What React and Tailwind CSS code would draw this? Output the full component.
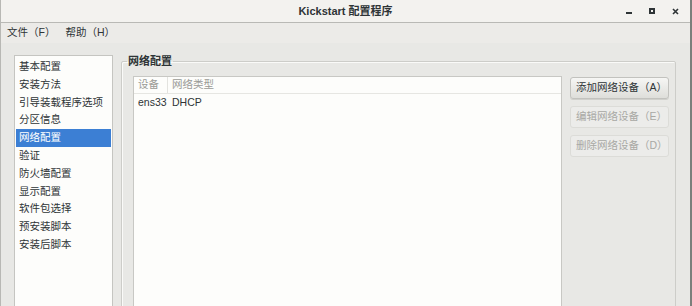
import React from 'react';

const items = ['基本配置', '安装方法', '引导装载程序选项', '分区信息', '网络配置', '验证', '防火墙配置', '显示配置', '软件包选择', '预安装脚本', '安装后脚本'];

const font = { fontFamily: '"Liberation Sans", "Noto Sans CJK SC", sans-serif' };

const Button = ({ label, disabled }) => (
  <div
    className={
      'h-[22px] flex items-center pl-[5px] rounded-[3px] border text-[10.5px] whitespace-nowrap ' +
      (disabled
        ? 'border-[#dcdcd8] bg-[#ececea] text-[#a8a8a4]'
        : 'border-[#c2c2be] bg-gradient-to-b from-[#f6f6f4] to-[#dededa] text-[#2e3436] shadow-[0_1px_0_#d0d0cc]')
    }
  >
    {label}
  </div>
);

export default function App() {
  return (
    <div style={font} className="w-[692px] h-[306px] overflow-hidden bg-[#e8e8e5] flex flex-col border-l border-[#b8b8b4] border-r-2 border-r-[#7c7f7b] text-[#2e3436] whitespace-nowrap">
      <div className="h-[23px] shrink-0 bg-[#f3f2ef] border-b border-[#b9b9b5] flex items-center relative">
        <div className="flex-1 text-center text-[11px] font-bold">Kickstart 配置程序</div>
        <div className="absolute right-[11px] top-0 h-full flex items-center gap-[17px] text-[#2e3436]">
          <div className="w-[6px] h-[2px] bg-[#2e3436] mt-[4px]" />
          <div className="w-[6px] h-[6px] border-2 border-[#2e3436]" />
          <svg width="7" height="7" viewBox="0 0 7 7"><path d="M1 1L6 6M6 1L1 6" stroke="#2e3436" strokeWidth="1.6" /></svg>
        </div>
      </div>
      <div className="h-[20px] shrink-0 bg-[#ecebe8] flex items-center px-[6px] gap-[10px] text-[10.5px]">
        <span>文件（F）</span>
        <span>帮助（H）</span>
      </div>
      <div className="flex-1 flex pl-[13px] pt-[12px] pr-[14px]">
        <div className="w-[101px] h-[400px] bg-[#fdfdfb] border border-[#c5c5c1] pt-[2px] px-[1px] text-[10.5px]">
          {items.map((t, i) => (
            <div
              key={t}
              className={'h-[17.8px] flex items-center pl-[3px] ' + (i === 4 ? 'bg-[#3c7fd4] text-white' : '')}
            >
              {t}
            </div>
          ))}
        </div>
        <fieldset className="ml-[8px] flex-1 h-[400px] border border-[#cdcdc9] shadow-[inset_1px_1px_0_#fafaf8] rounded-[2px] -mt-[1px]">
          <legend className="ml-[5px] px-[1px] text-[11px] font-bold leading-[14px]">网络配置</legend>
          <div className="flex pl-[11px] pt-[8px] pr-[6px] h-full">
            <div className="w-[429px] h-full bg-[#fdfdfb] border border-[#c8c8c4] text-[10.5px]">
              <div className="h-[17px] flex items-center border-b border-[#e6e6e2] text-[#9a9a96]">
                <div className="pl-[4px] w-[34px] border-r border-[#e3e3df] h-full flex items-center">设备</div>
                <div className="pl-[4px]">网络类型</div>
              </div>
              <div className="h-[17px] flex items-center">
                <div className="pl-[4px] w-[34px]">ens33</div>
                <div className="pl-[4px]">DHCP</div>
              </div>
            </div>
            <div className="ml-[8px] w-[99px] flex flex-col gap-[7px] pt-[1px]">
              <Button label="添加网络设备（A）" />
              <Button label="编辑网络设备（E）" disabled />
              <Button label="删除网络设备（D）" disabled />
            </div>
          </div>
        </fieldset>
      </div>
    </div>
  );
}
